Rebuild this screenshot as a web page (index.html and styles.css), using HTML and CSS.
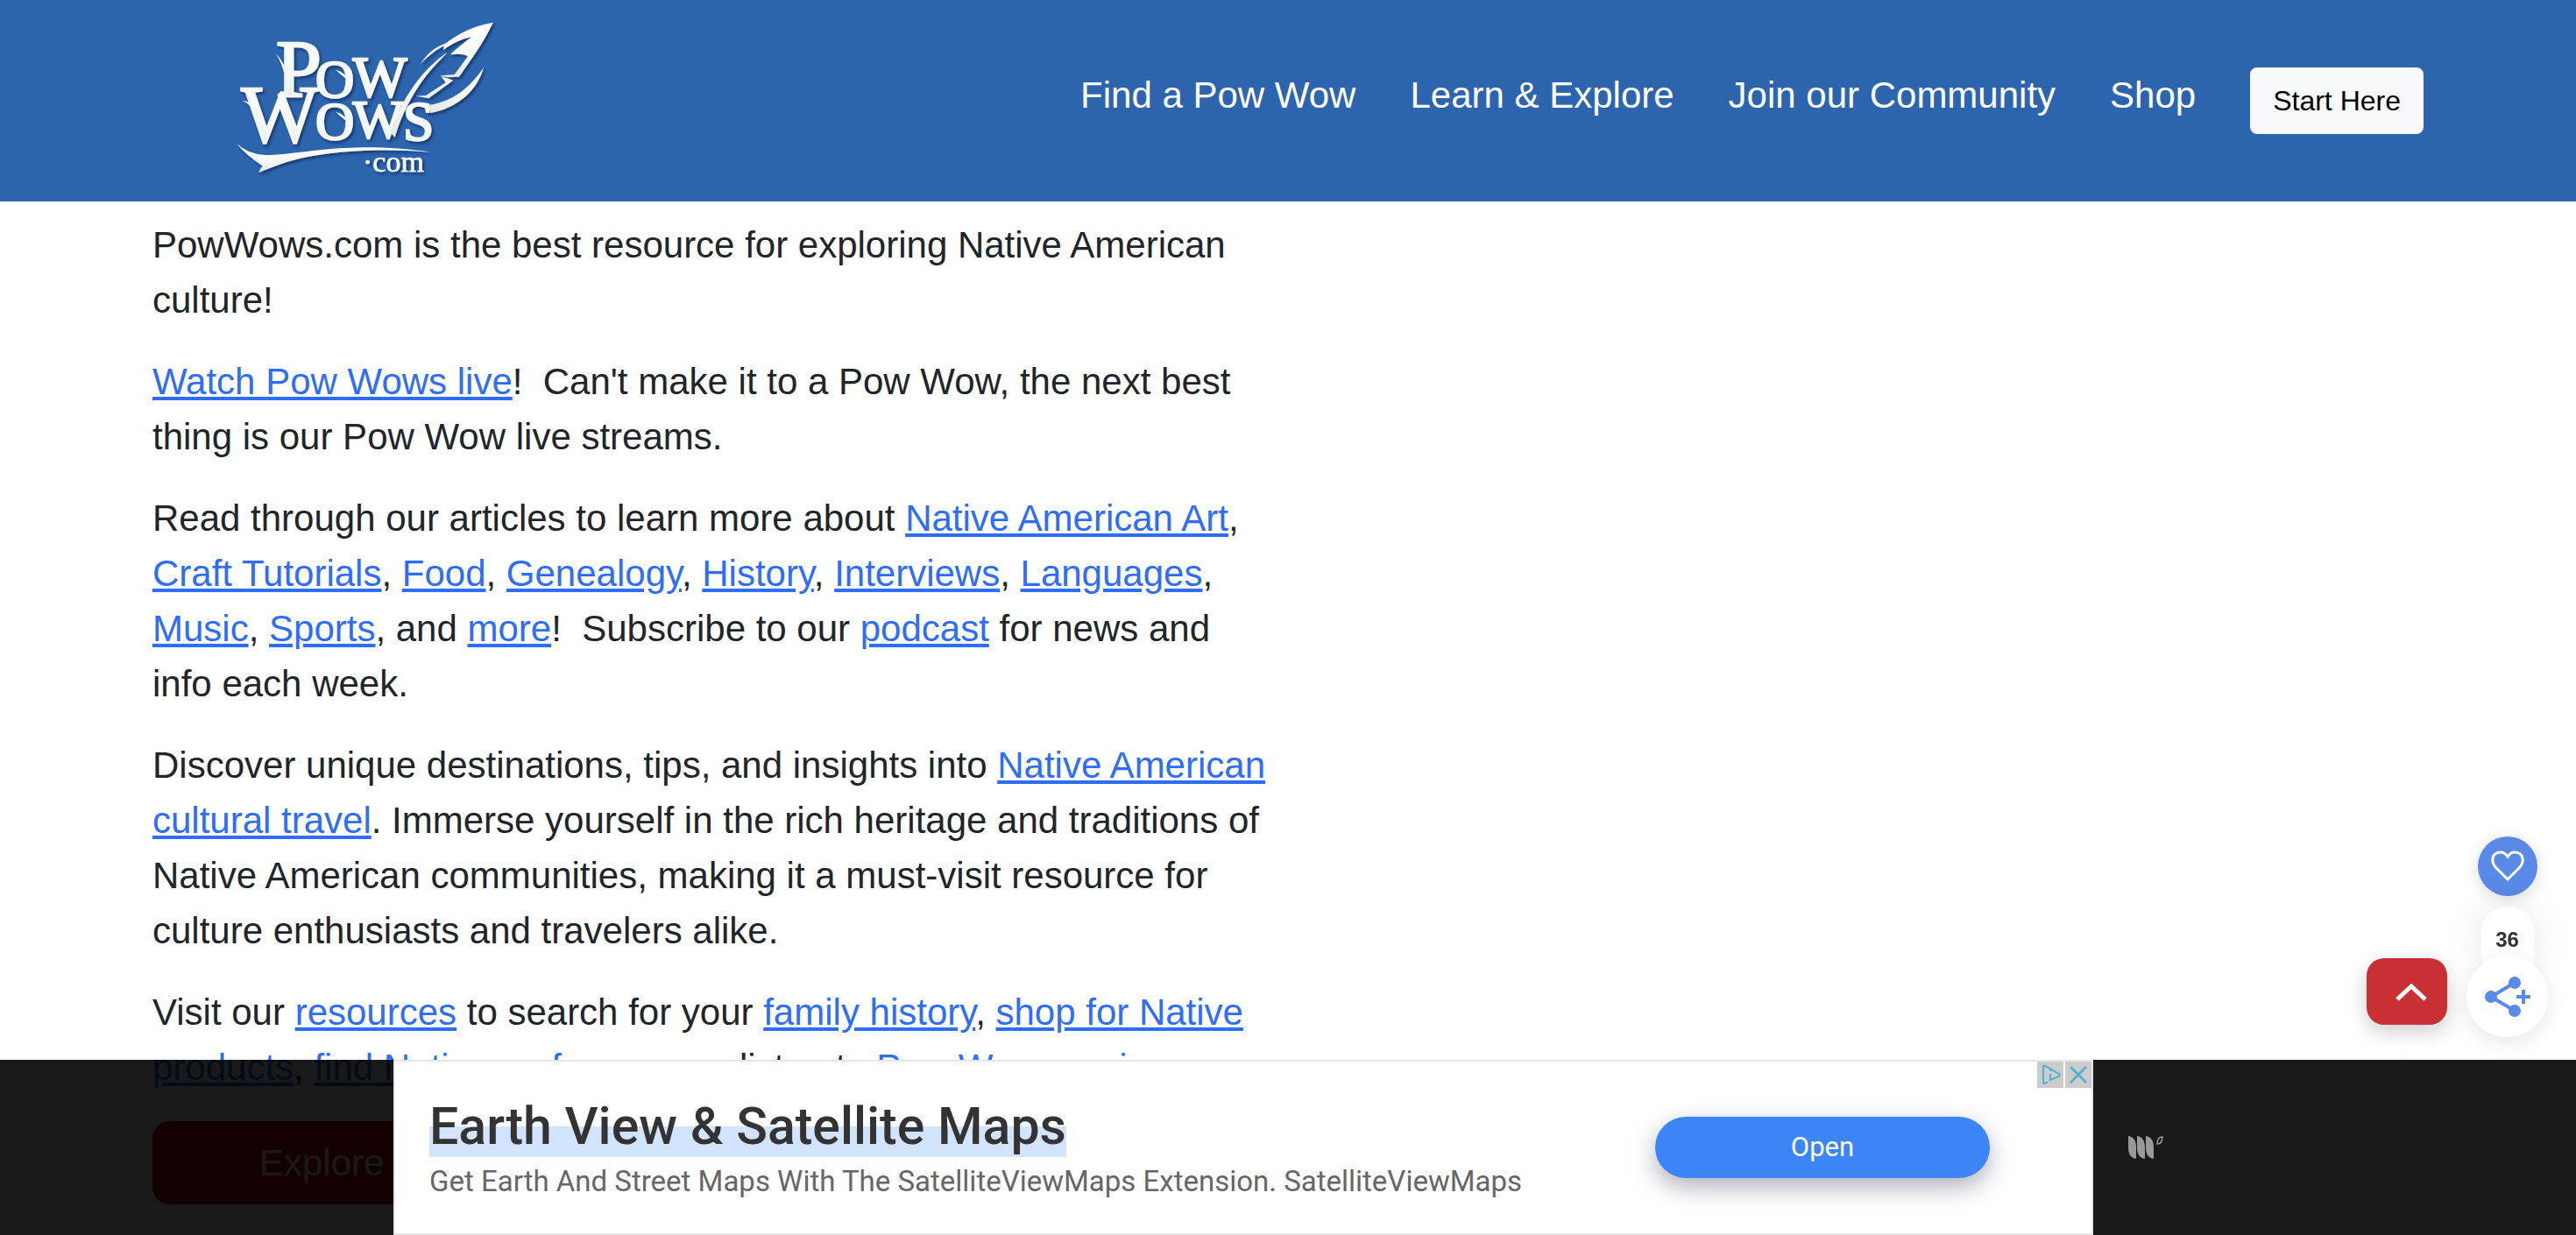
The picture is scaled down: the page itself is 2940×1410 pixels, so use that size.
FILE: index.html
```html
<!DOCTYPE html>
<html lang="en">
<head>
<meta charset="utf-8">
<title>PowWows.com</title>
<link rel="stylesheet" href="styles.css">
</head>
<body>
<header class="site-header">
  <a class="brand" href="#" aria-label="PowWows.com home">
    <svg class="brand-logo" viewBox="90 70 891 555" aria-hidden="true">
      <defs>
        <linearGradient id="silver" x1="0" y1="0" x2="0" y2="1">
          <stop offset="0" stop-color="#ffffff"/>
          <stop offset="0.6" stop-color="#f4f8f5"/>
          <stop offset="1" stop-color="#dfe9e4"/>
        </linearGradient>
        <filter id="lift" x="-10%" y="-10%" width="125%" height="125%">
          <feDropShadow dx="6" dy="7" stdDeviation="4" flood-color="#0c2a55" flood-opacity="0.75"/>
        </filter>
      </defs>
      <g fill="url(#silver)" filter="url(#lift)">
        <g class="brand-word">
          <text x="224" y="331" font-size="282">P</text>
          <text x="360" y="334" font-size="184">O</text>
          <text x="488" y="331" font-size="196">W</text>
          <text x="106" y="488" font-size="280">W</text>
          <text x="360" y="478" font-size="184">O</text>
          <text x="488" y="473" font-size="184">W</text>
          <text x="660" y="482" font-size="190">S</text>
        </g>
        <text class="brand-suffix" x="522" y="590" font-size="102">·com</text>
        <path d="M224 185 Q244 205 256 232 L256 268 Q246 215 224 185Z"/>
        <path d="M110 345 Q138 350 150 366 L162 392 Q138 358 110 345Z"/>
        <path d="M430 240 Q460 248 472 274 Q458 268 430 240Z"/>
        <path d="M430 384 Q460 392 472 418 Q458 412 430 384Z"/>
        <path d="M90 492 Q130 530 190 532 C300 532 480 480 756 522 C560 506 380 520 262 556 Q205 576 166 592 Q172 575 180 570 Q120 530 90 492Z"/>
        <path d="M968 78 C900 90 850 115 802 152 L798 172 C830 150 862 134 894 128 C866 150 842 168 822 188 C848 184 872 186 882 194 L836 256 L786 260 L812 266 L852 264 L906 186 Q944 130 968 78Z"/>
        <path d="M718 222 C738 190 768 160 806 150 L802 158 C772 172 745 194 718 222Z"/>
        <path d="M812 180 C735 230 672 320 642 392 L614 452 L632 472 C652 400 692 322 738 262 C762 230 790 204 812 180Z"/>
        <path d="M790 262 L832 276 L748 338 L704 330 L738 328 L806 284Z"/>
        <path d="M936 232 C890 300 830 350 745 362 L754 388 C850 370 915 310 936 232Z"/>
      </g>
    </svg>
  </a>
  <nav class="main-nav" aria-label="Main">
    <a href="#">Find a Pow Wow</a>
    <a href="#">Learn &amp; Explore</a>
    <a href="#">Join our Community</a>
    <a href="#">Shop</a>
    <button class="start-button" type="button">Start Here</button>
  </nav>
</header>

<main class="page">
  <article class="intro">
    <p>PowWows.com is the best resource for exploring Native American culture!</p>
    <p><a href="#">Watch Pow Wows live</a>!&nbsp; Can't make it to a Pow Wow, the next best thing is our Pow Wow live streams.</p>
    <p>Read through our articles to learn more about <a href="#">Native American Art</a>, <a href="#">Craft Tutorials</a>, <a href="#">Food</a>, <a href="#">Genealogy</a>, <a href="#">History</a>, <a href="#">Interviews</a>, <a href="#">Languages</a>, <a href="#">Music</a>, <a href="#">Sports</a>, and <a href="#">more</a>!&nbsp; Subscribe to our <a href="#">podcast</a> for news and info each week.</p>
    <p>Discover unique destinations, tips, and insights into <a href="#">Native American cultural travel</a>. Immerse yourself in the rich heritage and traditions of Native American communities, making it a must-visit resource for culture enthusiasts and travelers alike.</p>
    <p>Visit our <a href="#">resources</a> to search for your <a href="#">family history</a>, <a href="#">shop for Native products</a>, <a href="#">find Native performers</a>, or listen to <a href="#">Pow Wow music</a>.</p>
    <button class="explore-button" type="button">Explore</button>
  </article>
</main>

<button class="to-top" type="button" aria-label="Back to top">
  <svg viewBox="0 0 36 20" aria-hidden="true"><path d="M2 18 L18 3 L34 18" fill="none" stroke="#fff" stroke-width="5"/></svg>
</button>

<aside class="share" aria-label="Share">
  <button class="share-like" type="button" aria-label="Add to favorites">
    <svg viewBox="0 0 38 36" aria-hidden="true"><path d="M19 33 L6 20 C-1 13 1 2 11 2 C14 2 17 4 19 7 C21 4 24 2 27 2 C37 2 39 13 32 20 Z" fill="none" stroke="#fff" stroke-width="3"/></svg>
  </button>
  <span class="share-count">36</span>
  <button class="share-more" type="button" aria-label="Share this page">
    <svg viewBox="0 0 52 46" aria-hidden="true">
      <g fill="#5a8ae8"><circle cx="7" cy="23" r="7"/><circle cx="34" cy="7" r="7"/><circle cx="34" cy="39" r="7"/></g>
      <path d="M34 7 L7 23 L34 39 M36 23 H52 M44 15 V31" fill="none" stroke="#5a8ae8" stroke-width="4"/>
    </svg>
  </button>
</aside>

<aside class="ad-bar" aria-label="Advertisement">
  <div class="ad">
    <div class="ad-copy">
      <a class="ad-title" href="#">Earth View &amp; Satellite Maps</a>
      <p class="ad-text">Get Earth And Street Maps With The SatelliteViewMaps Extension. SatelliteViewMaps</p>
    </div>
    <button class="ad-open" type="button">Open</button>
    <div class="ad-badges">
      <button type="button" aria-label="Ad choices">
        <svg viewBox="0 0 30 30" aria-hidden="true"><path d="M11 23 V24 L8 25 Q7 25 7 24 V6 Q7 4 9 5 L25 14 Q27 15 25 17 L15 21 V14 M15 9 V11" fill="none" stroke="#4fb0cf" stroke-width="2"/></svg>
      </button>
      <button type="button" aria-label="Close ad">
        <svg viewBox="0 0 30 30" aria-hidden="true"><path d="M6 6 L24 24 M24 6 L6 24" fill="none" stroke="#4fb0cf" stroke-width="2.5"/></svg>
      </button>
    </div>
  </div>
  <a class="ad-network" href="#" aria-label="Ad network">
    <svg viewBox="0 0 40 28" aria-hidden="true">
      <g fill="#999"><path d="M0 1 C6 2 9 6 9 14 V27 C3 26 0 22 0 14Z"/><path d="M10 1 C16 2 19 6 19 14 V27 C13 26 10 22 10 14Z"/><path d="M20 1 C26 2 29 6 29 14 V27 C23 26 20 22 20 14Z"/></g>
      <path d="M39 2 C39 8 37 10 33 10 C33 5 35 2 39 2Z" fill="none" stroke="#999" stroke-width="1.5"/>
    </svg>
  </a>
</aside>
</body>
</html>
```
FILE: styles.css
```css
* {
  box-sizing: border-box;
}

html {
  height: 100%;
  overflow: hidden;
}

body {
  margin: 0;
  height: 100%;
  overflow: hidden;
  background: #fff;
  color: #212529;
  font-family: "Liberation Sans", Arial, sans-serif;
  font-size: 42px;
  line-height: 63px;
}

button {
  border: 0;
  padding: 0;
  font: inherit;
  cursor: pointer;
}

svg {
  display: block;
}

/* Header */

.site-header {
  display: flex;
  justify-content: space-between;
  align-items: flex-start;
  height: 230px;
  padding: 0 174px 0 270px;
  background: #2c64ad;
}

.brand {
  margin-top: 23px;
}

.brand-logo {
  width: 297px;
  height: 185px;
}

.brand-word,
.brand-suffix {
  font-family: "Liberation Serif", "Times New Roman", serif;
}

.brand-word {
  stroke: #f4f8f5;
  stroke-width: 7px;
}

.brand-suffix {
  stroke: #f4f8f5;
  stroke-width: 2px;
}

.main-nav {
  display: flex;
  align-items: flex-start;
  gap: 62px;
  margin-top: 77px;
}

.main-nav a {
  color: #fff;
  text-decoration: none;
}

.start-button {
  padding: 14px 26px;
  border-radius: 8px;
  background: #f8f9fa;
  color: #000;
  font-size: 32px;
  line-height: 48px;
}

/* Page */

.page {
  display: grid;
  grid-template-columns: 1fr 1fr;
  padding: 18px 150px 0;
}

.intro {
  padding: 0 24px;
}

.intro p {
  margin: 0 0 30px;
}

.intro a {
  color: #2f6df6;
  text-decoration-thickness: 4px;
  text-underline-offset: 3px;
}

.explore-button {
  padding: 16px 122px;
  border-radius: 20px;
  background: #c80000;
  color: #fff;
}

/* Floating controls */

.to-top {
  position: fixed;
  right: 147px;
  bottom: 240px;
  display: grid;
  place-items: center;
  width: 92px;
  height: 76px;
  padding: 2px 0 0 10px;
  border-radius: 20px;
  background: #c93033;
  box-shadow: 0 8px 24px rgba(0, 0, 0, 0.2);
}

.to-top svg {
  width: 36px;
  height: 20px;
}

.share {
  position: fixed;
  right: 32px;
  bottom: 226px;
  display: flex;
  flex-direction: column;
  align-items: center;
}

.share-like,
.share-more {
  display: grid;
  place-items: center;
  border-radius: 50%;
}

.share-like {
  width: 68px;
  height: 68px;
  margin-bottom: 12px;
  background: #5a8ae8;
  box-shadow: 0 4px 20px rgba(0, 0, 0, 0.14);
}

.share-like svg {
  width: 38px;
  height: 36px;
}

.share-count {
  width: 60px;
  height: 74px;
  margin-bottom: -18px;
  padding-top: 14px;
  border-radius: 30px 30px 0 0;
  background: #fff;
  box-shadow: 0 0 48px rgba(0, 0, 0, 0.1);
  color: #333;
  font-size: 24px;
  font-weight: 700;
  line-height: 48px;
  text-align: center;
}

.share-more {
  width: 93px;
  height: 93px;
  background: #fff;
  box-shadow: 0 6px 24px rgba(0, 0, 0, 0.1);
}

.share-more svg {
  width: 52px;
  height: 46px;
}

/* Bottom advertisement */

.ad-bar {
  position: fixed;
  right: 0;
  bottom: 0;
  left: 0;
  display: flex;
  justify-content: center;
  height: 200px;
  background: rgba(0, 0, 0, 0.9);
}

.ad {
  position: relative;
  display: flex;
  justify-content: space-between;
  align-items: center;
  width: 1940px;
  padding: 0 116px 0 39px;
  border: 2px solid #e6e6e6;
  background: #fff;
  font-family: Roboto, "Open Sans", sans-serif;
}

.ad-copy {
  display: flex;
  flex-direction: column;
  align-items: flex-start;
  gap: 4px;
  padding-top: 4px;
}

.ad-title {
  background: linear-gradient(transparent 50%, #d2e4fd 50%);
  color: #333;
  font-size: 59px;
  font-weight: 500;
  line-height: 70px;
  text-decoration: none;
}

.ad-text {
  margin: 0;
  color: #666;
  font-size: 33px;
  line-height: 48px;
}

.ad-open {
  width: 382px;
  height: 70px;
  border-radius: 35px;
  background: #3b85f6;
  box-shadow: 0 10px 28px rgba(20, 30, 60, 0.35);
  color: #fff;
  font-size: 31px;
  line-height: 48px;
}

.ad-badges {
  position: absolute;
  top: 0;
  right: 0;
  display: flex;
  gap: 2px;
}

.ad-badges button {
  width: 30px;
  height: 30px;
  background: #ccc;
}

.ad-network {
  align-self: center;
  margin: 0 22px 0 40px;
}

.ad-network svg {
  width: 40px;
  height: 28px;
}
```
